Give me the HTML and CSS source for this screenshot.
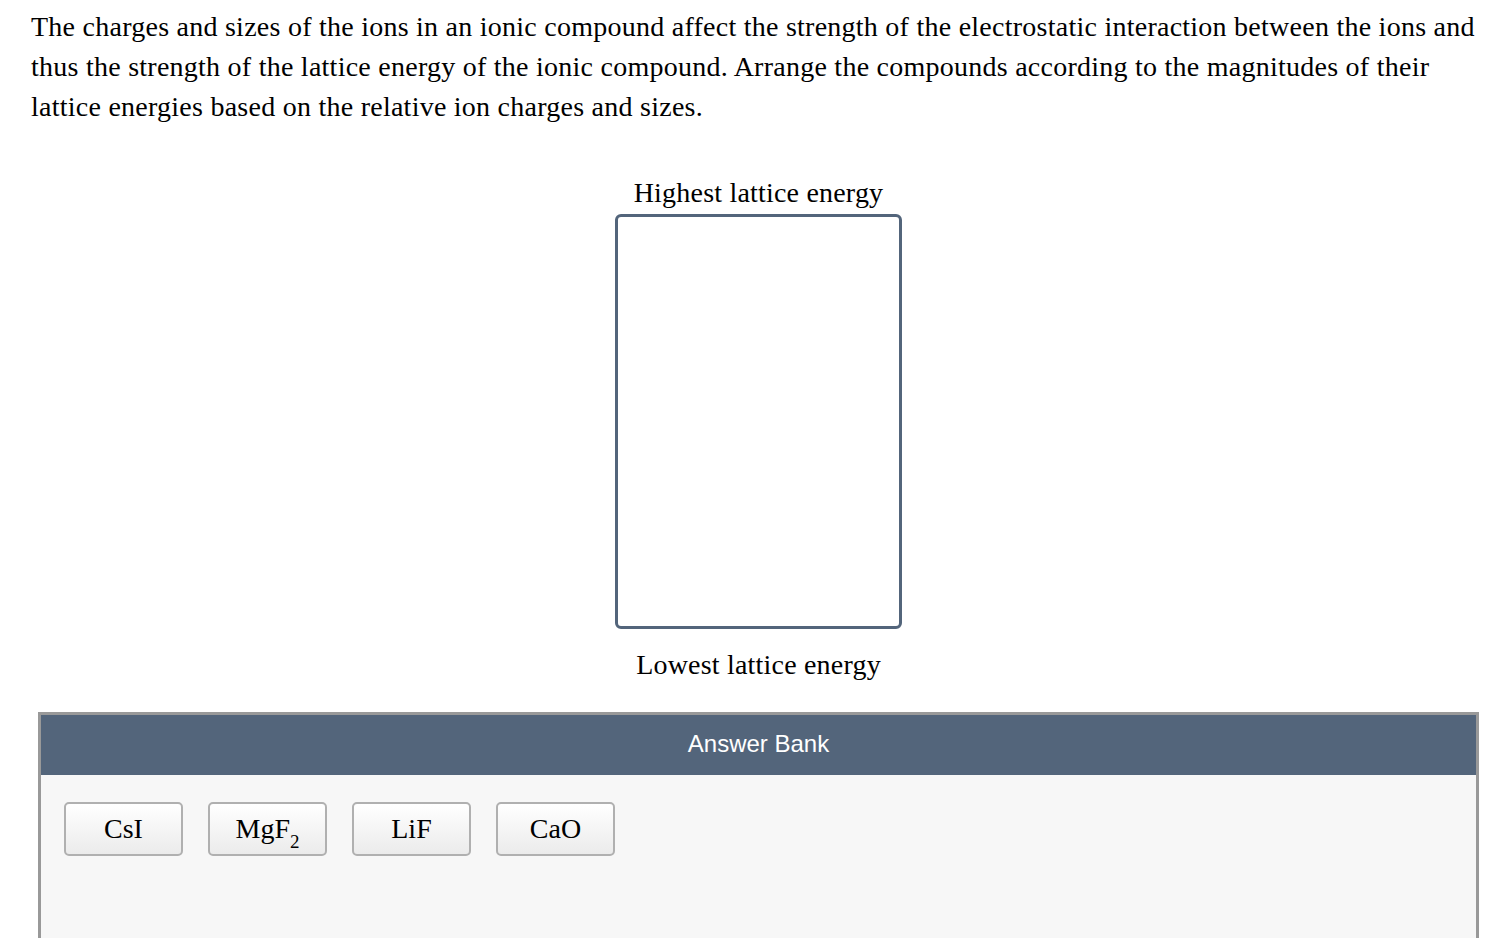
FILE: index.html
```html
<!DOCTYPE html>
<html lang="en">
<head>
    <meta charset="UTF-8">
    <meta name="viewport" content="width=device-width, initial-scale=1.0">
    <title>Lattice energy ranking</title>
    <link rel="stylesheet" href="styles.css">
</head>
<body>
    <p class="question">The charges and sizes of the ions in an ionic compound affect the strength of the electrostatic interaction between the ions and thus the strength of the lattice energy of the ionic compound. Arrange the compounds according to the magnitudes of their lattice energies based on the relative ion charges and sizes.</p>

    <div class="workspace">
        <div class="ranking">
            <div class="rank-label top">Highest lattice energy</div>
            <div class="drop-zone"></div>
            <div class="rank-label bottom">Lowest lattice energy</div>
        </div>

        <div class="answer-bank">
            <div class="bank-header">Answer Bank</div>
            <div class="bank-items">
                <div class="chip">CsI</div>
                <div class="chip">MgF<sub>2</sub></div>
                <div class="chip">LiF</div>
                <div class="chip">CaO</div>
            </div>
        </div>
    </div>
</body>
</html>
```

FILE: styles.css
```css
body {
    margin: 0;
    font-family: "Liberation Serif", "Times New Roman", serif;
    color: #000;
    background-color: #fff;
}
.question {
    margin: 0;
    padding: 7px 16px 0 31px;
    font-size: 28px;
    line-height: 40px;
    letter-spacing: 0.25px;
}
.workspace {
    margin: 0 25px 0 38px;
}
.ranking {
    display: flex;
    flex-direction: column;
    align-items: center;
    padding-top: 51px;
}
.rank-label {
    font-size: 28px;
    line-height: 30px;
    letter-spacing: 0.2px;
}
.rank-label.top {
    margin-bottom: 6px;
}
.rank-label.bottom {
    margin-top: 21px;
}
.drop-zone {
    width: 281px;
    height: 409px;
    border: 3px solid #53657b;
    border-radius: 6px;
    background-color: #fff;
}
.answer-bank {
    margin-top: 32px;
    border: 3px solid #999;
    border-bottom: none;
    background-color: #f7f7f7;
}
.bank-header {
    height: 60px;
    line-height: 58px;
    background-color: #53657b;
    color: #fff;
    text-align: center;
    font-family: "Liberation Sans", Arial, sans-serif;
    font-size: 24px;
}
.bank-items {
    display: flex;
    gap: 25px;
    padding: 27px 23px 0;
    height: 160px;
}
.chip {
    width: 115px;
    height: 50px;
    border: 2px solid #b0b0b0;
    border-radius: 5px;
    background: linear-gradient(#fff, #ebebeb);
    font-size: 28px;
    line-height: 50px;
    text-align: center;
    box-sizing: content-box;
}
.chip sub {
    font-size: 19px;
    line-height: 0;
    vertical-align: -10px;
}
```
